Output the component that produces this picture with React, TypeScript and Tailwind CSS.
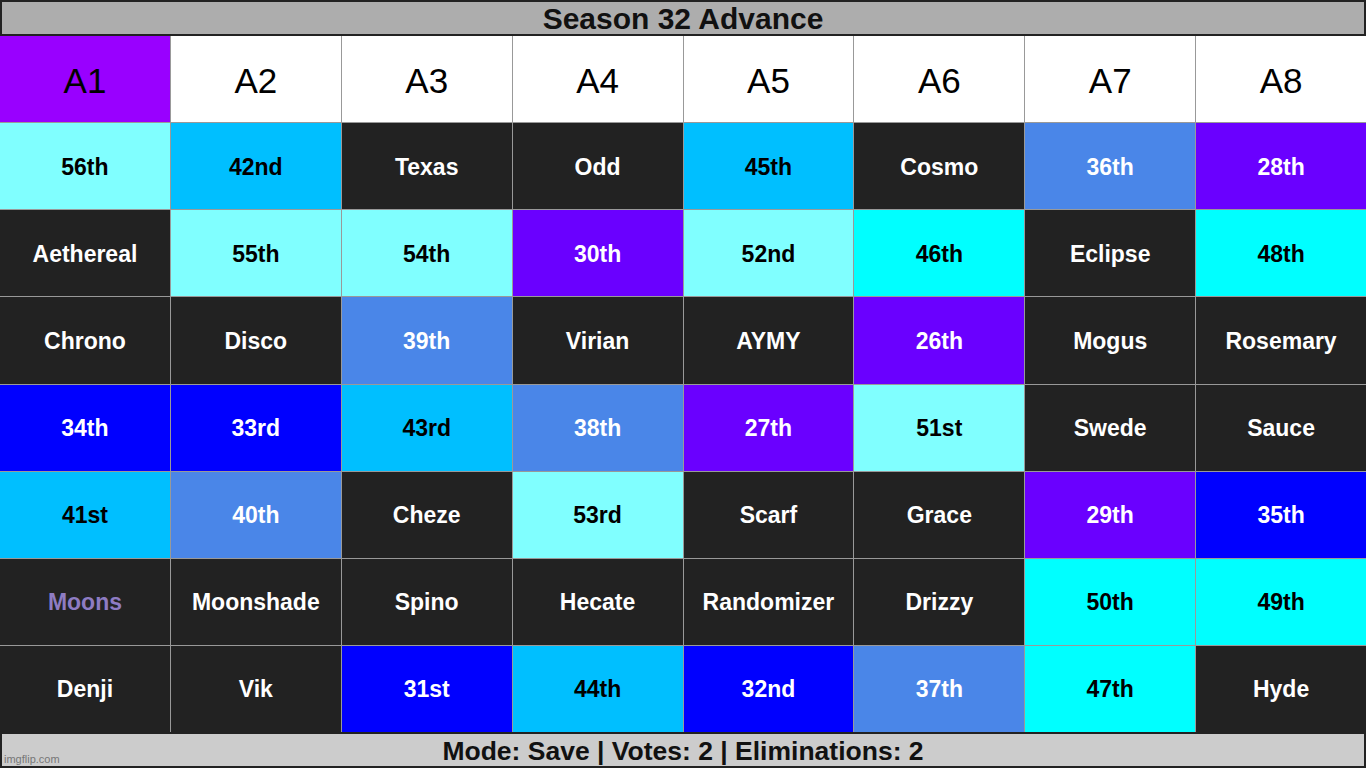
import React from "react";

type C = { t: string; k: string };

const bg: Record<string, string> = {
  lc: "bg-[#80ffff] text-black",
  sky: "bg-[#00bfff] text-black",
  d: "bg-[#222222] text-white",
  corn: "bg-[#4a86e8] text-white",
  vio: "bg-[#6a00ff] text-white",
  cy: "bg-[#00ffff] text-black",
  bl: "bg-[#0000ff] text-white",
  moon: "bg-[#222222] text-[#8e7cc3]",
};

const rows: C[][] = [
  [
    { t: "56th", k: "lc" },
    { t: "42nd", k: "sky" },
    { t: "Texas", k: "d" },
    { t: "Odd", k: "d" },
    { t: "45th", k: "sky" },
    { t: "Cosmo", k: "d" },
    { t: "36th", k: "corn" },
    { t: "28th", k: "vio" },
  ],
  [
    { t: "Aethereal", k: "d" },
    { t: "55th", k: "lc" },
    { t: "54th", k: "lc" },
    { t: "30th", k: "vio" },
    { t: "52nd", k: "lc" },
    { t: "46th", k: "cy" },
    { t: "Eclipse", k: "d" },
    { t: "48th", k: "cy" },
  ],
  [
    { t: "Chrono", k: "d" },
    { t: "Disco", k: "d" },
    { t: "39th", k: "corn" },
    { t: "Virian", k: "d" },
    { t: "AYMY", k: "d" },
    { t: "26th", k: "vio" },
    { t: "Mogus", k: "d" },
    { t: "Rosemary", k: "d" },
  ],
  [
    { t: "34th", k: "bl" },
    { t: "33rd", k: "bl" },
    { t: "43rd", k: "sky" },
    { t: "38th", k: "corn" },
    { t: "27th", k: "vio" },
    { t: "51st", k: "lc" },
    { t: "Swede", k: "d" },
    { t: "Sauce", k: "d" },
  ],
  [
    { t: "41st", k: "sky" },
    { t: "40th", k: "corn" },
    { t: "Cheze", k: "d" },
    { t: "53rd", k: "lc" },
    { t: "Scarf", k: "d" },
    { t: "Grace", k: "d" },
    { t: "29th", k: "vio" },
    { t: "35th", k: "bl" },
  ],
  [
    { t: "Moons", k: "moon" },
    { t: "Moonshade", k: "d" },
    { t: "Spino", k: "d" },
    { t: "Hecate", k: "d" },
    { t: "Randomizer", k: "d" },
    { t: "Drizzy", k: "d" },
    { t: "50th", k: "cy" },
    { t: "49th", k: "cy" },
  ],
  [
    { t: "Denji", k: "d" },
    { t: "Vik", k: "d" },
    { t: "31st", k: "bl" },
    { t: "44th", k: "sky" },
    { t: "32nd", k: "bl" },
    { t: "37th", k: "corn" },
    { t: "47th", k: "cy" },
    { t: "Hyde", k: "d" },
  ],
];

const headers = ["A1", "A2", "A3", "A4", "A5", "A6", "A7", "A8"];

export default function App() {
  return (
    <div
      className="w-[1366px] h-[768px] flex flex-col bg-[#999999] overflow-hidden"
      style={{ fontFamily: '"Liberation Sans", Arial, sans-serif' }}
    >
      <div className="h-[36px] shrink-0 bg-[#adadad] border-2 border-[#222222] flex items-center justify-center pt-[2px] text-[30px] font-bold text-[#111111] leading-none">
        Season 32 Advance
      </div>
      <div className="flex-1 grid grid-cols-8 grid-rows-8 gap-px">
        {headers.map((h, i) => (
          <div
            key={h}
            className={`flex items-center justify-center pt-[3px] text-[35px] text-black leading-none ${
              i === 0 ? "bg-[#9900ff]" : "bg-white"
            }`}
          >
            {h}
          </div>
        ))}
        {rows.flat().map((c, i) => (
          <div
            key={i}
            className={`flex items-center justify-center pt-[2px] text-[23px] font-bold leading-none ${bg[c.k]}`}
          >
            {c.t}
          </div>
        ))}
      </div>
      <div className="h-[36px] shrink-0 bg-[#cccccc] border-2 border-[#222222] relative flex items-center justify-center pt-[2px] text-[26.5px] font-bold text-[#111111] leading-none">
        Mode: Save | Votes: 2 | Eliminations: 2
        <span className="absolute left-[2px] bottom-[1px] text-[11px] font-normal text-[#777777]">
          imgflip.com
        </span>
      </div>
    </div>
  );
}
